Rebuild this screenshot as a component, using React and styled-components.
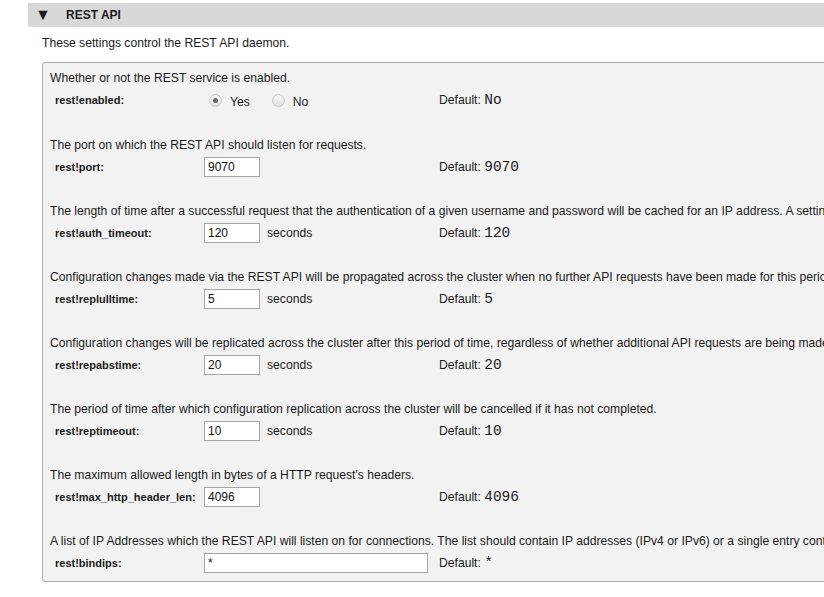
import React from "react";
import styled, { createGlobalStyle } from "styled-components";

//-----------Styling--------------//

const GlobalStyle = createGlobalStyle`
  html, body {
    margin: 0;
    padding: 0;
    background: #fff;
    overflow: hidden;
  }
  body {
    font-family: "Liberation Sans", Arial, sans-serif;
    color: #1a1a1a;
  }
`;

const Page = styled.div`
  padding: 3px 0 0 28px;
  width: 1300px;
`;

const SectionHeader = styled.div`
  display: flex;
  align-items: center;
  height: 24px;
  background: #d8d8d8;
  font-size: 12px;
  font-weight: bold;
`;

const Toggle = styled.span`
  width: 38px;
  padding-left: 7px;
  box-sizing: border-box;
  font-size: 16px;
  line-height: 1;
`;

const Section = styled.div`
  padding-left: 14px;
`;

const Intro = styled.p`
  margin: 0;
  padding: 9px 0 12px;
  font-size: 12.15px;
  line-height: 14px;
`;

const Box = styled.div`
  display: flex;
  flex-direction: column;
  gap: 12px;
  background: #f2f2f2;
  border: 1px solid #aaa;
  border-radius: 3px;
  padding: 1px 0 0 7px;
`;

const Setting = styled.div`
  padding: 6px 0 ${(p) => (p.$tall ? 7 : 6)}px;
`;

const Desc = styled.div`
  font-size: 12.15px;
  line-height: 16px;
  white-space: nowrap;
`;

const Row = styled.div`
  display: grid;
  grid-template-columns: 154px 235px auto;
  align-items: center;
  height: 24px;
  margin-top: 2px;
`;

const Label = styled.div`
  padding-left: 5px;
  font-size: 11px;
  font-weight: bold;
`;

const Control = styled.div`
  display: flex;
  align-items: center;
  font-size: 12.15px;
`;

const TextInput = styled.input`
  box-sizing: border-box;
  width: ${(p) => p.$width || 56}px;
  height: 20px;
  border: 1px solid #a6a6a6;
  background: #fff;
  padding: 0 3px;
  font-family: "Liberation Sans", Arial, sans-serif;
  font-size: 12px;
  color: #111;
  outline: none;
`;

const Unit = styled.span`
  margin-left: 7px;
`;

const RadioLabel = styled.label`
  display: flex;
  align-items: center;
  margin-right: 17px;
  font-size: 12.15px;
  padding-top: 3px;
`;

const Radio = styled.span`
  box-sizing: border-box;
  width: 13px;
  height: 13px;
  border-radius: 50%;
  border: 1px solid #c4c4c4;
  background: linear-gradient(#f6f6f6, #e0e0e0);
  margin: -3px 8px 0 5px;
  display: flex;
  align-items: center;
  justify-content: center;

  &::after {
    content: "";
    width: 5px;
    height: 5px;
    border-radius: 50%;
    background: ${(p) => (p.$checked ? "#666" : "transparent")};
  }
`;

const Default = styled.div`
  font-size: 12.15px;
  white-space: nowrap;
`;

const Mono = styled.span`
  font-family: "Liberation Mono", "Courier New", monospace;
  font-size: 14.5px;
`;

//----------------data------------------///

const settings = [
  {
    desc: "The port on which the REST API should listen for requests.",
    key: "rest!port",
    value: "9070",
    def: "9070",
  },
  {
    desc: "The length of time after a successful request that the authentication of a given username and password will be cached for an IP address. A setting of 0 disables the cache forcing every request to be authenticated.",
    key: "rest!auth_timeout",
    value: "120",
    unit: "seconds",
    def: "120",
  },
  {
    desc: "Configuration changes made via the REST API will be propagated across the cluster when no further API requests have been made for this period of time.",
    key: "rest!replulltime",
    value: "5",
    unit: "seconds",
    def: "5",
  },
  {
    desc: "Configuration changes will be replicated across the cluster after this period of time, regardless of whether additional API requests are being made.",
    key: "rest!repabstime",
    value: "20",
    unit: "seconds",
    def: "20",
  },
  {
    desc: "The period of time after which configuration replication across the cluster will be cancelled if it has not completed.",
    key: "rest!reptimeout",
    value: "10",
    unit: "seconds",
    def: "10",
  },
  {
    desc: "The maximum allowed length in bytes of a HTTP request's headers.",
    key: "rest!max_http_header_len",
    value: "4096",
    def: "4096",
  },
  {
    desc: "A list of IP Addresses which the REST API will listen on for connections. The list should contain IP addresses (IPv4 or IPv6) or a single entry containing an asterisk (*).",
    key: "rest!bindips",
    value: "*",
    def: "*",
    wide: true,
  },
];

//----------------component's logic------------------///

const App = () => {
  return (
    <Page>
      <GlobalStyle />
      <SectionHeader>
        <Toggle>▼</Toggle>
        REST API
      </SectionHeader>
      <Section>
        <Intro>These settings control the REST API daemon.</Intro>
        <Box>
          <Setting $tall>
            <Desc>Whether or not the REST service is enabled.</Desc>
            <Row>
              <Label>rest!enabled:</Label>
              <Control>
                <RadioLabel>
                  <Radio $checked />
                  Yes
                </RadioLabel>
                <RadioLabel>
                  <Radio />
                  No
                </RadioLabel>
              </Control>
              <Default>
                Default: <Mono>No</Mono>
              </Default>
            </Row>
          </Setting>
          {settings.map((s) => (
            <Setting key={s.key}>
              <Desc>{s.desc}</Desc>
              <Row>
                <Label>{s.key}:</Label>
                <Control>
                  <TextInput
                    defaultValue={s.value}
                    $width={s.wide ? 224 : 56}
                  />
                  {s.unit && <Unit>{s.unit}</Unit>}
                </Control>
                <Default>
                  Default: <Mono>{s.def}</Mono>
                </Default>
              </Row>
            </Setting>
          ))}
        </Box>
      </Section>
    </Page>
  );
};

export default App;
